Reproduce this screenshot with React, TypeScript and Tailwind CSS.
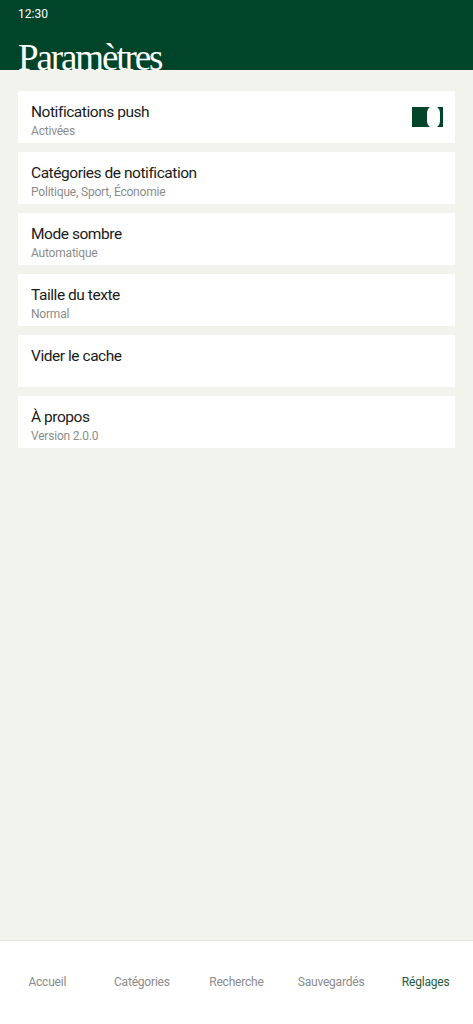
import React from "react";

const items = [
  { title: "Notifications push", sub: "Activées", toggle: true },
  { title: "Catégories de notification", sub: "Politique, Sport, Économie" },
  { title: "Mode sombre", sub: "Automatique" },
  { title: "Taille du texte", sub: "Normal" },
  { title: "Vider le cache", sub: "" },
  { title: "À propos", sub: "Version 2.0.0" },
];

const tabs = ["Accueil", "Catégories", "Recherche", "Sauvegardés", "Réglages"];

export default function App() {
  return (
    <div
      className="flex h-[1024px] w-full flex-col bg-[#f3f3ee]"
      style={{ fontFamily: "Roboto, 'Noto Sans', sans-serif" }}
    >
      <header className="h-[70px] shrink-0 overflow-hidden bg-[#00442a] px-[18px]">
        <div className="pt-[6px] text-[12px] leading-[16px] text-white">12:30</div>
        <h1
          className="mt-[14px] text-[37px] leading-[44px] tracking-[-2.1px] text-white"
          style={{ fontFamily: "'Liberation Serif', 'DejaVu Serif', serif" }}
        >
          Paramètres
        </h1>
      </header>
      <main className="flex flex-1 flex-col gap-[9px] px-[18px] pt-[21px]">
        {items.map((it) => (
          <div
            key={it.title}
            className="flex h-[52px] items-start justify-between bg-white pl-[13px] pr-[12px] pt-[10px]"
          >
            <div>
              <div className="text-[15.5px] leading-[22px] tracking-[-0.45px] text-[#1a1a1a]">
                {it.title}
              </div>
              {it.sub && (
                <div className="text-[12px] leading-[16px] tracking-[-0.2px] text-[#8c8c8c]">
                  {it.sub}
                </div>
              )}
            </div>
            {it.toggle && (
              <div className="relative mt-[6px] h-[20px] w-[31px] overflow-hidden bg-[#00442a]">
                <div className="absolute left-[15px] top-[-1px] h-[22px] w-[13px] rounded-full bg-white" />
              </div>
            )}
          </div>
        ))}
      </main>
      <nav className="flex h-[84px] shrink-0 items-center border-t border-[#e6e6e1] bg-white pb-[2px]">
        {tabs.map((t) => (
          <div
            key={t}
            className={
              "flex-1 text-center text-[12px] tracking-[-0.2px] " +
              (t === "Réglages" ? "text-[#1f5c3d]" : "text-[#8c8c8c]")
            }
          >
            {t}
          </div>
        ))}
      </nav>
    </div>
  );
}
